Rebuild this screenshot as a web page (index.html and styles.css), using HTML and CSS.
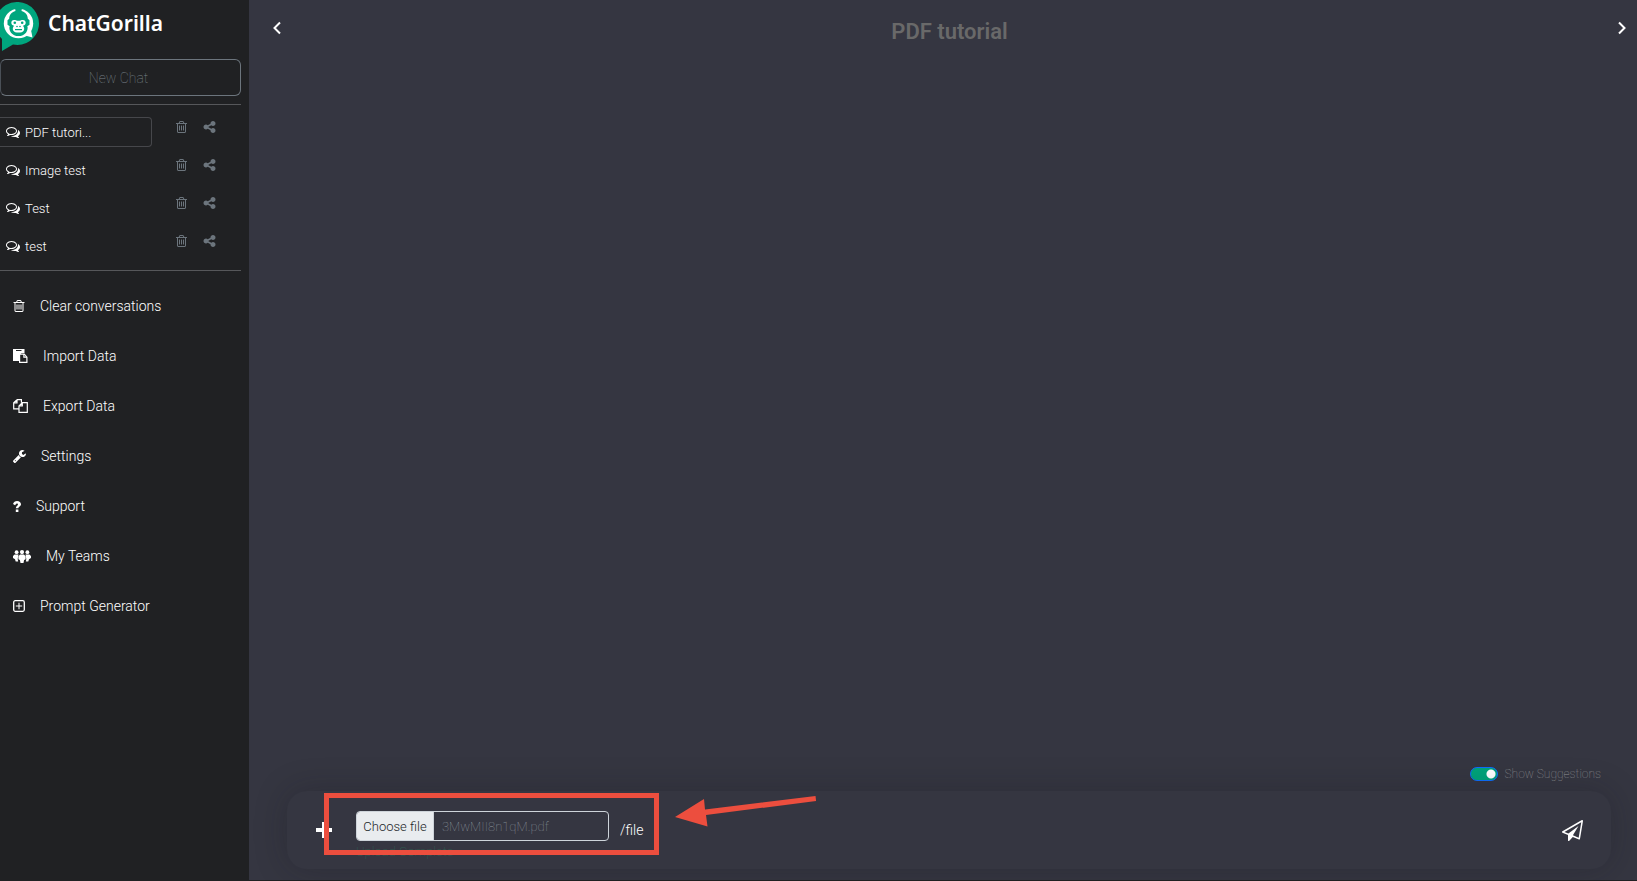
FILE: index.html
```html
<!DOCTYPE html>
<html lang="en">
<head>
<meta charset="utf-8">
<title>ChatGorilla</title>
<link rel="stylesheet" href="styles.css">
</head>
<body>
<svg class="sprite" aria-hidden="true">
  <symbol id="trash" viewBox="192 128 1408 1536"><path d="M704 736v576q0 14-9 23t-23 9h-64q-14 0-23-9t-9-23v-576q0-14 9-23t23-9h64q14 0 23 9t9 23zm256 0v576q0 14-9 23t-23 9h-64q-14 0-23-9t-9-23v-576q0-14 9-23t23-9h64q14 0 23 9t9 23zm256 0v576q0 14-9 23t-23 9h-64q-14 0-23-9t-9-23v-576q0-14 9-23t23-9h64q14 0 23 9t9 23zm128 724v-948h-896v948q0 22 7 40.5t14.5 27 10.5 8.5h832q3 0 10.5-8.5t14.5-27 7-40.5zm-672-1076h448l-48-117q-7-9-17-11h-317q-10 2-17 11zm928 32v64q0 14-9 23t-23 9h-96v948q0 83-47 143.5t-113 60.5h-832q-66 0-113-58.5t-47-141.5v-952h-96q-14 0-23-9t-9-23v-64q0-14 9-23t23-9h309l70-167q15-37 54-63t79-26h320q40 0 79 26t54 63l70 167h309q14 0 23 9t9 23z"/></symbol>
  <symbol id="share" viewBox="128 128 1536 1536"><path d="M1344 1024q133 0 226.500 93.500t93.500 226.500-93.500 226.500-226.500 93.500-226.500-93.500-93.500-226.500q0-12 2-34l-360-180q-92 86-218 86-133 0-226.500-93.500t-93.500-226.500 93.500-226.500 226.500-93.500q126 0 218 86l360-180q-2-22-2-34 0-133 93.500-226.500t226.500-93.500 226.500 93.500 93.500 226.500-93.500 226.500-226.500 93.500q-126 0-218-86l-360 180q2 22 2 34t-2 34l360 180q92-86 218-86z"/></symbol>
  <symbol id="chats" viewBox="0 128 1792 1664"><path d="M704 384q-153 0-286 52t-211.500 141-78.500 191q0 82 53 158t149 132l97 56-35 84q34-20 62-39l44-31 53 10q78 14 153 14 153 0 286-52t211.500-141 78.500-191-78.500-191-211.500-141-286-52zm0-128q191 0 353.500 68.500t256.500 186.500 94 257-94 257-256.500 186.500-353.500 68.500q-86 0-176-16-124 88-278 128-36 9-86 16h-3q-11 0-20.500-8t-11.500-21q-1-3-1-6.500t.5-6.500 2-6l2.500-5 3.500-5.500 4-5 4.500-5 4-4.500q5-6 23-25t26-29.500 22.500-29 25-38.500 20.500-44q-124-72-195-177t-71-224q0-139 94-257t256.500-186.500 353.500-68.500zm822 1169q10 24 20.500 44t25 38.500 22.500 29 26 29.500 23 25q1 1 4 4.500t4.500 5 4 5 3.500 5.500l2.500 5 2 6 .5 6.500-1 6.500q-3 14-13 22t-22 7q-50-7-86-16-154-40-278-128-90 16-176 16-271 0-472-132 58 4 88 4 161 0 309-45t264-129q125-92 192-212t67-254q0-77-23-152 129 71 204 178t75 230q0 120-71 224.500t-195 176.500z"/></symbol>
  <symbol id="wrench" viewBox="85 128 1641 1643"><path d="M448 1472q0-26-19-45t-45-19-45 19-19 45 19 45 45 19 45-19 19-45zm644-420l-682 682q-37 37-90 37-52 0-91-37l-106-108q-38-36-38-90 0-53 38-91l681-681q39 98 114.500 173.500t173.500 114.500zm634-435q0 39-23 106-47 134-164.500 217.500t-258.500 83.500q-185 0-316.500-131.500t-131.500-316.500 131.500-316.500 316.500-131.500q58 0 121.500 16.500t107.500 46.500q16 11 16 28t-16 28l-293 169v224l193 107q5-3 79-48.500t135.500-81 70.500-35.500q15 0 23.500 10t8.500 25z"/></symbol>
  <symbol id="plane" viewBox="0 0 1792 1792"><path d="M1764 11q33 24 27 64l-256 1536q-5 29-32 45-14 8-31 8-11 0-24-5l-527-215-298 327q-18 21-47 21-14 0-23-4-19-7-30-23.500t-11-36.500v-452l-472-193q-37-14-40-55-3-39 32-59l1664-960q35-21 68 2zm-342 1499l221-1323-1434 827 336 137 863-639-478 797z"/></symbol>
  <symbol id="paste" viewBox="0 0 15 14"><path fill-rule="evenodd" d="M0 0h11.500V4H8.500L6 6.500V12H0zM3 1v1h5.500v-1z"/><path d="M7 4.500h4.500L14.500 8v6H6V5.500zM7.200 5.700v7.100h6.100V8.700h-3v-3zm4.200.3v1.600h1.500z" fill-rule="evenodd"/></symbol>
  <symbol id="copy" viewBox="0 0 15 14"><path d="M4 .600h4.400v3M4 .600v3.200H.7M4 .600L.7 3.800v6h5M9.300 3.600h5v9.800H6V6.900zv3.300H6" fill="none" stroke="currentColor" stroke-width="1.200"/></symbol>
  <symbol id="question" viewBox="0 0 8 11"><path d="M0 3C.7 1 2 0 4.100 0 6.300 0 8 1.400 8 3.300 8 5.500 5.400 5.600 5.400 7.300H2.800C2.700 5 5 4.700 5 3.400 5 2.200 3.200 2 2.100 4.300zM2.800 8.400h2.600V11H2.800z"/></symbol>
  <symbol id="group" viewBox="0 0 18 13"><circle cx="3.600" cy="2.200" r="1.900"/><circle cx="14.400" cy="2.200" r="1.900"/><circle cx="9" cy="2.100" r="2.100"/><path d="M1.600 4.400h3.900L4.700 9l.5 2.500H2.700L2 9.200 0 8V6zM16.400 4.400h-3.900l.8 4.600-.5 2.500h2.500l.7-2.300L18 8V6z"/><path d="M7.100 4.500h3.800l1.700 1.800v3l-1.500.8L10.500 13h-3l-.6-2.900-1.500-.8v-3z"/></symbol>
  <symbol id="plus-box" viewBox="0 0 12 12"><rect x=".7" y=".7" width="10.600" height="10.600" rx="1.500" fill="none" stroke="currentColor" stroke-width="1.300"/><path d="M5.500 2.800h1v2.700h2.700v1H6.500v2.700h-1V6.500H2.800v-1h2.700z"/></symbol>
</svg>

<div class="app">
  <aside class="sidebar">
    <div class="brand">
      <svg class="brand-mark" viewBox="0 0 40 50" aria-hidden="true">
        <path fill="#00a67e" d="M18.500 2A21.500 21.500 0 1 1 13 44.500L2 51V39A21.500 21.500 0 0 1 18.500 2z"/>
        <circle cx="18.500" cy="23.500" r="14.700" fill="#fff"/>
        <path fill="#fff" d="M25 35.500l7.500 2-2-10z"/>
        <path fill="#00a67e" d="M15 8h7l-.5 3c4.200 1.200 6.300 4.200 6.300 7.800l1.700 1.400v4.600l-2.200 1.400c.8 1.500.2 4.500-1.300 6.500-1.500 2-4.500 3.400-7.500 3.400s-6-1.400-7.500-3.400c-1.500-2-2.100-5-1.300-6.500l-2.200-1.400v-4.600l1.700-1.400c0-3.600 2.100-6.600 6.300-7.800z"/>
        <path fill="#fff" d="M14 20c1.800 0 3 .8 4.500.8S21.200 20 23 20c1.700 0 2.700 1.300 2.700 2.800s-1 2.600-2.700 3c1.200 1.500 1.600 3.200.8 4.600-.9 1.500-3 2.200-5.300 2.200s-4.400-.7-5.300-2.200c-.8-1.400-.4-3.100.8-4.600-1.700-.4-2.700-1.500-2.700-3S12.300 20 14 20z"/>
        <g fill="#00a67e"><circle cx="14.800" cy="22.800" r="1.300"/><circle cx="22.200" cy="22.800" r="1.300"/><circle cx="17" cy="26.500" r=".8"/><circle cx="20" cy="26.500" r=".8"/><path d="M15 29h7v1.200h-7z"/></g>
      </svg>
      <span class="brand-name">ChatGorilla</span>
    </div>
    <button class="new-chat" type="button">New Chat</button>
    <ul class="chats">
      <li class="chat"><a class="chat-link active" href="#"><svg><use href="#chats"/></svg>PDF tutori...</a><button type="button" aria-label="Delete"><svg class="i-trash"><use href="#trash"/></svg></button><button type="button" aria-label="Share"><svg class="i-share"><use href="#share"/></svg></button></li>
      <li class="chat"><a class="chat-link" href="#"><svg><use href="#chats"/></svg>Image test</a><button type="button" aria-label="Delete"><svg class="i-trash"><use href="#trash"/></svg></button><button type="button" aria-label="Share"><svg class="i-share"><use href="#share"/></svg></button></li>
      <li class="chat"><a class="chat-link" href="#"><svg><use href="#chats"/></svg>Test</a><button type="button" aria-label="Delete"><svg class="i-trash"><use href="#trash"/></svg></button><button type="button" aria-label="Share"><svg class="i-share"><use href="#share"/></svg></button></li>
      <li class="chat"><a class="chat-link" href="#"><svg><use href="#chats"/></svg>test</a><button type="button" aria-label="Delete"><svg class="i-trash"><use href="#trash"/></svg></button><button type="button" aria-label="Share"><svg class="i-share"><use href="#share"/></svg></button></li>
    </ul>
    <nav class="menu">
      <a href="#"><svg class="w11"><use href="#trash"/></svg>Clear conversations</a>
      <a href="#"><svg class="w15"><use href="#paste"/></svg>Import Data</a>
      <a href="#"><svg class="w15"><use href="#copy"/></svg>Export Data</a>
      <a href="#"><svg class="w13"><use href="#wrench"/></svg>Settings</a>
      <a href="#"><svg class="w8"><use href="#question"/></svg>Support</a>
      <a href="#"><svg class="w18"><use href="#group"/></svg>My Teams</a>
      <a href="#"><svg class="w12"><use href="#plus-box"/></svg>Prompt Generator</a>
    </nav>
  </aside>

  <main class="main">
    <header class="top">
      <button type="button" aria-label="Collapse sidebar"><svg viewBox="0 0 10 14"><path d="M8 1.500L2.500 7 8 12.500"/></svg></button>
      <h1>PDF tutorial</h1>
      <button type="button" aria-label="Next"><svg viewBox="0 0 10 14"><path d="M2 1.500L7.500 7 2 12.500"/></svg></button>
    </header>
    <section class="conversation" aria-label="Conversation"></section>
    <div class="suggest">
      <input type="checkbox" id="suggestions" checked>
      <label for="suggestions">Show Suggestions</label>
    </div>
    <form class="composer">
      <button class="add" type="button" aria-label="Add"><svg viewBox="0 0 16 16"><path d="M6 0h4v6h6v4h-6v6H6v-6H0V6h6z"/></svg></button>
      <div class="upload">
        <div class="file">
          <button type="button">Choose file</button>
          <input type="text" value="3MwMII8n1qM.pdf" readonly aria-label="Selected file">
        </div>
        <span class="status">Upload Complete</span>
      </div>
      <input class="message" type="text" value="/file" aria-label="Message">
      <button class="send" type="button" aria-label="Send"><svg><use href="#plane"/></svg></button>
      <div class="highlight"></div>
      <svg class="pointer" viewBox="0 0 142 30" aria-hidden="true"><path d="M0 19L29 1l1 10.500L140.500-2l.6 5L31 17l1.500 11.500z"/></svg>
    </form>
  </main>
</div>
</body>
</html>
```
FILE: styles.css
```css
* { box-sizing: border-box; }
body { margin: 0; background: #353641; font-family: Roboto, "Liberation Sans", sans-serif; font-weight: 300; color: #fff; }
button { font: inherit; color: inherit; background: none; border: 0; padding: 0; cursor: pointer; }
a { color: inherit; text-decoration: none; }
svg { display: block; fill: currentColor; overflow: visible; flex: none; }
.sprite { position: absolute; width: 0; height: 0; }

.app { display: flex; min-height: 100vh; border-bottom: 1px solid #202123; }

.sidebar { flex: none; width: 249px; padding-right: 8px; background: #202123; }
.brand { display: flex; gap: 8px; height: 59px; }
.brand-mark { width: 40px; height: 50px; }
.brand-name { font: 600 21px/46px "Noto Sans", "Open Sans", sans-serif; }
.new-chat { display: block; width: 100%; height: 37px; padding-right: 4px; border: 1px solid #6c757d; border-left-color: #4a5057; border-radius: 6px; color: #79828a; font-size: 14px; font-weight: 100; }

.chats { list-style: none; margin: 8px 0 0; padding: 12px 0 1px; border: solid #56575a; border-width: 1px 0; }
.chat { display: flex; align-items: flex-start; height: 38px; color: #6c757d; }
.chat-link { display: flex; align-items: center; gap: 5px; width: 152px; height: 30px; margin-right: 24px; padding-left: 6px; border: 1px solid transparent; border-left: 0; border-radius: 0 4px 4px 0; color: #fff; font-size: 13px; }
.chat-link svg { width: 14px; height: 13px; }
.chat-link.active { border-color: #46474b; }
.chat button { margin: 4px 16px 0 0; }
.i-trash { width: 11px; height: 12px; }
.i-share { width: 13px; height: 12px; }

.menu { padding: 10px 0 0 13px; }
.menu a { display: flex; align-items: center; gap: 15px; height: 50px; font-size: 14px; }
.menu svg { height: 12px; }
.menu .w8 { width: 8px; height: 11px; }
.menu .w11 { width: 12px; }
.menu .w12 { width: 12px; }
.menu .w13 { width: 13px; height: 13px; }
.menu .w15 { width: 15px; height: 14px; }
.menu .w18 { width: 18px; height: 13px; }

.main { flex: 1; min-width: 0; display: flex; flex-direction: column; }
.top { display: flex; justify-content: space-between; align-items: center; height: 56px; padding: 0 10px 0 23px; }
.top h1 { margin: 8px 0 0; font-size: 22px; line-height: 28px; font-weight: 600; color: #696969; }
.top svg { width: 10px; height: 14px; fill: none; stroke: #fff; stroke-width: 2; }
.conversation { flex: 1; }
.suggest { display: flex; align-items: center; justify-content: flex-end; gap: 7px; height: 18px; margin: 0 36px 8px; font-size: 12px; font-weight: 100; color: #96979a; }
.suggest input { appearance: none; width: 28px; height: 14px; margin: 0; border: 1px solid #0d6efd; border-radius: 7px; background: radial-gradient(circle at 20px 6px, #fff 4px, #00a37a 5px); }

.composer { position: relative; display: flex; align-items: center; margin: 0 26px 11px 38px; padding: 0 28px 0 29px; border-radius: 20px; box-shadow: 0 0 32px rgba(20, 20, 28, .25); }
.add svg { width: 16px; height: 16px; }
.upload { display: flex; flex-direction: column; width: 253px; margin: 0 11px 0 24px; padding: 20px 0 6px; }
.file { display: flex; height: 30px; border: 1px solid #ced4da; border-radius: 4px; overflow: hidden; font-size: 13px; }
.file button { flex: none; width: 77px; background: #e9ecef; border-right: 1px solid #ced4da; color: #212529; font-weight: 300; }
.file input { flex: 1; min-width: 0; padding: 0 8px; border: 0; background: none; color: #8c959d; font: inherit; font-weight: 100; }
.status { font-size: 13px; line-height: 22px; font-weight: 200; color: #2f5a50; }
.message { flex: 1; min-width: 0; padding: 0; border: 0; outline: 0; background: none; color: #fff; font: inherit; font-size: 14px; }
.send svg { width: 21px; height: 21px; }
.highlight { position: absolute; left: 37px; top: 2px; width: 335px; height: 62px; border: 5px solid #ec4e3e; }
.pointer { position: absolute; left: 388px; top: 7px; width: 142px; height: 30px; color: #ec4e3e; }
```
